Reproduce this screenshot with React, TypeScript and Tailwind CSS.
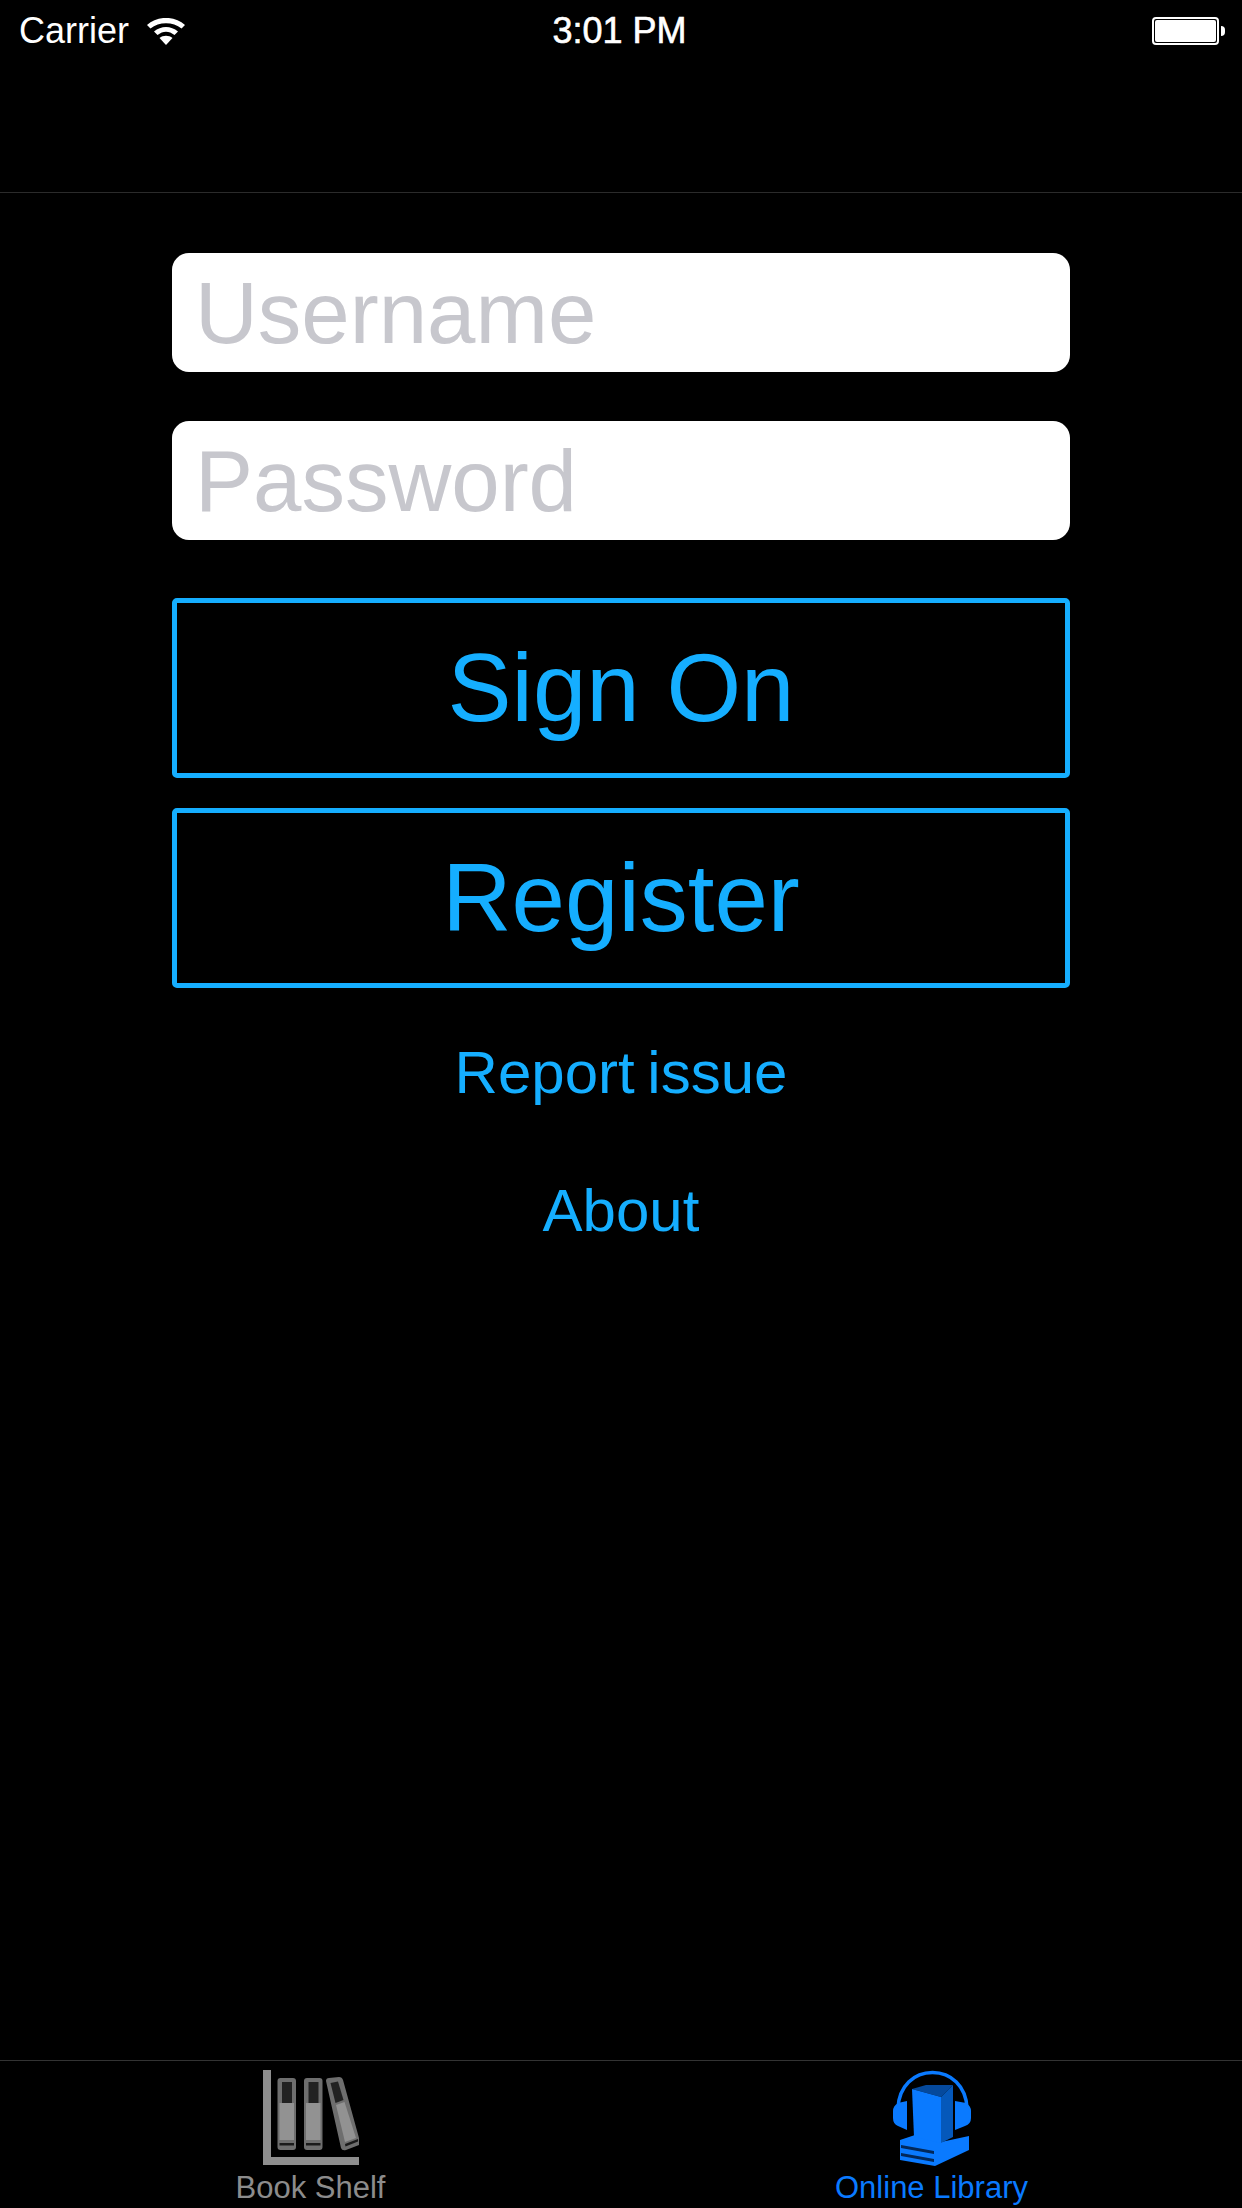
import React from "react";

const WifiIcon = () => (
  <svg width="38" height="27" viewBox="0 0 38 27" fill="#fff">
    <path d="M0 7C10 -2.5 28 -2.5 38 7L34.5 10.5C26 3.5 12 3.5 3.500 10.5Z" />
    <path d="M7 13.5C14 7.500 24 7.500 31 13.5L27.500 17C22 12.500 16 12.500 10.500 17Z" />
    <path d="M19 27L12.500 20C16 17 22 17 25.500 20Z" />
  </svg>
);

const Battery = () => (
  <div className="flex items-center gap-[2px]">
    <div className="w-[67px] h-[28px] rounded-[4px] border-2 border-white p-px">
      <div className="w-full h-full rounded-[2px] bg-white" />
    </div>
    <div className="w-[4px] h-[10px] rounded-r-full bg-white" />
  </div>
);

const ShelfBook = ({ x }: { x: number }) => (
  <g transform={`translate(${x} 0)`}>
    <rect x="0" y="8" width="18.500" height="72" rx="3" fill="#6e6e6e" />
    <rect x="4.500" y="12" width="10" height="21" fill="#222222" />
    <rect x="2" y="33" width="14.500" height="37" fill="#929292" />
    <rect x="2" y="73" width="14.500" height="2.500" fill="#1a1a1a" />
  </g>
);

const BookShelfIcon = () => (
  <svg width="96" height="96" viewBox="0 0 96 96" className="blur-[0.7px]">
    <path d="M0 0H8V87H96V95H0Z" fill="#8e8e8e" />
    <ShelfBook x={14.500} />
    <ShelfBook x={41} />
    <path d="M63 11Q63 8 66 8L76 7Q79 7 80 10L96 68V75L83 80Q79 81 78 78Z" fill="#6e6e6e" />
    <path d="M67.500 13L75 11.500L80.500 30L72.500 33Z" fill="#222222" />
    <path d="M73 35L81.500 32L93 68L82 72Z" fill="#929292" />
    <path d="M82 74L95 69V71.500L82.500 76.500Z" fill="#1a1a1a" />
  </svg>
);

const OnlineLibraryIcon = () => (
  <svg width="78" height="96" viewBox="0 0 78 96" className="blur-[0.7px]">
    <path d="M5 38C6 16 21 2.500 39.500 2.500C58 2.500 73 16 74 38" fill="none" stroke="#0a7aff" strokeWidth="3.500" />
    <path d="M5 33L14 31V60L5 56Q0 54 0 48V41Q0 36 5 33Z" fill="#0a7aff" />
    <path d="M73 33L62 31V60L72 56Q78 54 78 48V41Q78 36 73 33Z" fill="#0a7aff" />
    <path d="M7 70L22 65L48 72L76 66V80L42 96L7 90Z" fill="#0a7aff" />
    <path d="M8 75L41 81L41 84L8 78Z" fill="#02285a" />
    <path d="M8 83L41 89L41 92L8 86Z" fill="#02285a" />
    <path d="M19 19L33 15H60L48 27Z" fill="#05499c" />
    <path d="M19 19L48 27V73L21 67Z" fill="#0a7aff" />
    <path d="M48 27L60 15V67L48 73Z" fill="#0558ba" />
  </svg>
);

const OutlineButton = ({ label }: { label: string }) => (
  <button className="w-full h-[180px] rounded-[5px] border-[5px] border-[#15aeff] text-[96px] text-[#15aeff] leading-none">
    {label}
  </button>
);

const TextField = ({ placeholder }: { placeholder: string }) => (
  <input
    placeholder={placeholder}
    className="w-full h-[119px] rounded-[17px] bg-white pl-[23px] text-[87px] leading-none outline-none placeholder:text-[#c7c7cd]"
  />
);

const LinkRow = ({ label }: { label: string }) => (
  <a className="h-[138px] flex items-center justify-center text-[60px] text-[#15aeff] [word-spacing:-4px]">{label}</a>
);

export default function App() {
  return (
    <div className="w-[1242px] h-[2208px] flex flex-col bg-black font-['Liberation_Sans',Arial,sans-serif]">
      <header className="h-[193px] shrink-0 border-b border-[#2b2b2b]">
        <div className="h-[62px] px-[19px] pr-[17px] grid grid-cols-[1fr_auto_1fr] items-center text-[36px] text-white">
          <div className="flex items-center gap-[18px]">
            <span>Carrier</span>
            <WifiIcon />
          </div>
          <span className="pr-[5px] [-webkit-text-stroke:0.6px_white]">3:01 PM</span>
          <div className="flex justify-end">
            <Battery />
          </div>
        </div>
      </header>

      <main className="flex-1 px-[172px] pt-[60px] flex flex-col">
        <TextField placeholder="Username" />
        <div className="mt-[49px]">
          <TextField placeholder="Password" />
        </div>
        <div className="mt-[58px] flex flex-col gap-[30px]">
          <OutlineButton label="Sign On" />
          <OutlineButton label="Register" />
        </div>
        <div className="mt-[16px] flex flex-col">
          <LinkRow label="Report issue" />
          <LinkRow label="About" />
        </div>
      </main>

      <nav className="h-[148px] shrink-0 border-t border-[#333333] grid grid-cols-2 text-[31px] leading-[36px]">
        <div className="flex flex-col items-center pt-[9px] text-[#8c8c8c]">
          <BookShelfIcon />
          <span className="mt-[4px]">Book Shelf</span>
        </div>
        <div className="flex flex-col items-center pt-[9px] text-[#0a7aff]">
          <OnlineLibraryIcon />
          <span className="mt-[4px]">Online Library</span>
        </div>
      </nav>
    </div>
  );
}
